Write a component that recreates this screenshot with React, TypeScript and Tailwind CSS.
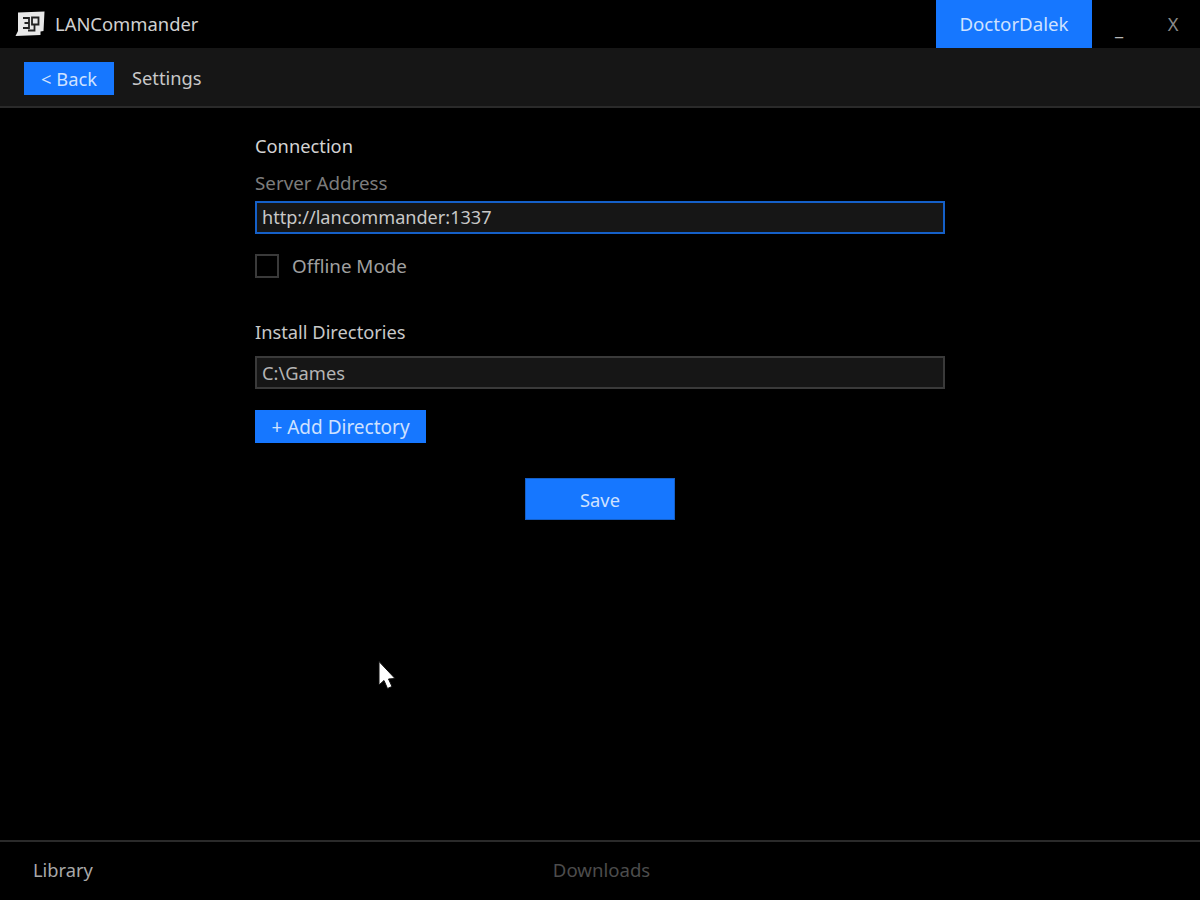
import React from "react";

const BLUE = "bg-[#1677ff]";

function Logo() {
  return (
    <svg width="30" height="26" viewBox="0 0 30 26" className="shrink-0">
      <path d="M3 1.5 L29.5 0.5 L28.5 20 L25.5 20.5 L25.5 24 L0.5 25 L3 20 Z" fill="#e8e8e8" />
      <g fill="none" stroke="#222" strokeWidth="1.8">
        <path d="M8 7 H14 V17 H8 M9.5 12 H14" />
        <path d="M17 6.5 H23.5 V13.5 H17 Z M19.5 13.5 V19.5 H13" />
      </g>
    </svg>
  );
}

function Cursor() {
  return (
    <svg width="20" height="32" viewBox="0 0 20 32" className="absolute left-[377px] top-[660px]">
      <path d="M2 1.5 V25 L7 20.5 L10.5 28.5 L15 26.5 L11.5 19 L18 18.5 Z" fill="#ffffff" stroke="#111" strokeWidth="1" />
    </svg>
  );
}

export default function App() {
  return (
    <div className="relative flex h-[900px] w-[1200px] flex-col overflow-hidden bg-black font-['Noto_Sans',sans-serif] text-[18.3px] text-[#c8c8c8]">
      {/* title bar */}
      <header className="flex h-12 items-center">
        <div className="ml-[15px] flex items-center gap-[10px]">
          <Logo />
          <span className="text-[18.4px] text-[#d0d0d0]">LANCommander</span>
        </div>
        <div className={`ml-auto flex h-12 w-[156px] items-center justify-center ${BLUE} text-[18.7px] text-[#cfe2ff]`}>
          DoctorDalek
        </div>
        <div className="flex h-12 w-[54px] items-center justify-center pt-2 text-[#b8b8b8]">_</div>
        <div className="flex h-12 w-[54px] items-center justify-center text-[#8a8a8a]">X</div>
      </header>

      {/* sub nav */}
      <nav className="flex h-[60px] items-start gap-[18px] border-b-2 border-[#2a2a2a] bg-[#161616] pl-6 pt-[14px]">
        <button className={`flex h-[33px] w-[90px] items-center justify-center ${BLUE} text-[#cfe2ff]`}>&lt; Back</button>
        <span className="flex h-[33px] items-center pb-[1px]">Settings</span>
      </nav>

      {/* settings form */}
      <main className="flex flex-1 flex-col pl-[255px] pt-[24px]">
        <div className="w-[690px]">
          <h2 className="h-[28px] leading-[28px] text-[#d4d4d4]">Connection</h2>
          <label className="mt-[9px] block h-[28px] text-[18.8px] leading-[28px] text-[#7c7c7c]">Server Address</label>
          <div className="mt-[4px] flex h-[33px] items-center border-2 border-[#1560c8] bg-[#161616] pl-[5px] text-[18.1px] text-[#c8c8c8]">
            http://lancommander:1337
          </div>
          <div className="mt-[19px] flex h-[26px] items-center gap-[13px]">
            <span className="h-6 w-6 border-2 border-[#3a3a3a]" />
            <span className="text-[18.8px] text-[#a0a0a0]">Offline Mode</span>
          </div>
          <h2 className="mt-[39px] h-[28px] leading-[28px] text-[#c8c8c8]">Install Directories</h2>
          <div className="mt-[10px] flex h-[33px] items-center border-2 border-[#3a3a3a] bg-[#161616] pl-[5px] text-[#b4b4b4]">
            C:\Games
          </div>
          <button className={`mt-[21px] flex h-[33px] w-[171px] items-center justify-center ${BLUE} pt-[1px] text-[19px] text-[#cfe2ff]`}>
            + Add Directory
          </button>
          <div className="mt-[35px] flex justify-center">
            <button className={`h-[42px] w-[150px] border border-[#1560c8] ${BLUE} pt-[1px] text-[#cfe2ff]`}>Save</button>
          </div>
        </div>
      </main>

      {/* footer tabs */}
      <footer className="relative flex h-[60px] items-center border-t-2 border-[#2a2a2a] pb-[2px]">
        <span className="ml-[33px] text-[#a8a8a8]">Library</span>
        <span className="ml-[460px] text-[18.6px] text-[#4c4c4c]">Downloads</span>
      </footer>

      <Cursor />
    </div>
  );
}
